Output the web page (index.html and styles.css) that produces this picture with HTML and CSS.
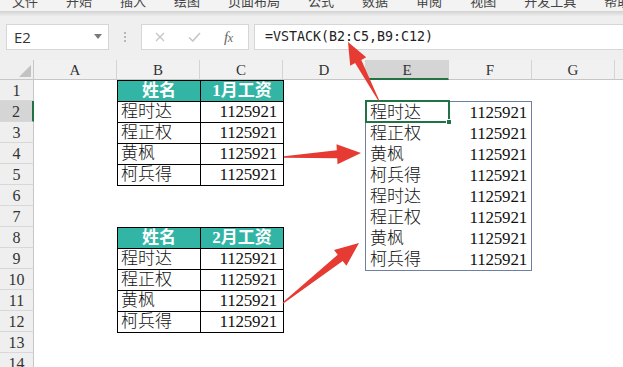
FILE: index.html
```html
<!DOCTYPE html>
<html lang="zh-CN">
<head>
<meta charset="utf-8">
<title>VSTACK</title>
<link rel="stylesheet" href="styles.css">
</head>
<body>
<div class="ribbon">
  <div class="tabs">
    <span>文件</span><span>开始</span><span>插入</span><span>绘图</span><span>页面布局</span><span>公式</span><span>数据</span><span>审阅</span><span>视图</span><span>开发工具</span><span>帮助</span>
  </div>
</div>
<div class="shade"></div>
<div class="fbar">
  <div class="namebox"><span>E2</span><svg class="dd" width="8" height="5" viewBox="0 0 8 5"><path d="M0 0H8L4 5Z" fill="#7a7a7a"/></svg></div>
  <div class="dots"><i></i><i></i><i></i></div>
  <div class="fbtns">
    <svg class="ic-x" width="10" height="10" viewBox="0 0 10 10"><path d="M1 1L9 9M9 1L1 9" stroke="#c4c4c4" stroke-width="1.3" fill="none"/></svg>
    <svg class="ic-ok" width="13" height="10" viewBox="0 0 13 10"><path d="M1 5.5L4.8 9L12 1" stroke="#c4c4c4" stroke-width="1.5" fill="none"/></svg>
    <span class="fx"><i>f</i><i class="sx">x</i></span>
  </div>
  <div class="formula">=VSTACK(B2:C5,B9:C12)</div>
</div>
<div class="sheet">
  <div class="corner"><svg width="12" height="12" viewBox="0 0 12 12"><path d="M12 0V12H0Z" fill="#c2c2c2"/></svg></div>
  <div class="colhead">
    <div>A</div><div>B</div><div>C</div><div>D</div><div class="on">E</div><div>F</div><div>G</div><div>H</div>
  </div>
  <div class="rowhead">
    <div>1</div><div class="on">2</div><div>3</div><div>4</div><div>5</div><div>6</div><div>7</div>
    <div>8</div><div>9</div><div>10</div><div>11</div><div>12</div><div>13</div><div>14</div>
  </div>

  <div class="tbl t1">
    <div class="c h">姓名</div><div class="c h">1月工资</div>
    <div class="c t">程时达</div><div class="c n">1125921</div>
    <div class="c t">程正权</div><div class="c n">1125921</div>
    <div class="c t">黄枫</div><div class="c n">1125921</div>
    <div class="c t">柯兵得</div><div class="c n">1125921</div>
  </div>

  <div class="tbl t2">
    <div class="c h">姓名</div><div class="c h">2月工资</div>
    <div class="c t">程时达</div><div class="c n">1125921</div>
    <div class="c t">程正权</div><div class="c n">1125921</div>
    <div class="c t">黄枫</div><div class="c n">1125921</div>
    <div class="c t">柯兵得</div><div class="c n">1125921</div>
  </div>

  <div class="spill">
    <div class="s t first">程时达<span class="sel"><span class="handle"></span></span></div><div class="s n">1125921</div>
    <div class="s t">程正权</div><div class="s n">1125921</div>
    <div class="s t">黄枫</div><div class="s n">1125921</div>
    <div class="s t">柯兵得</div><div class="s n">1125921</div>
    <div class="s t">程时达</div><div class="s n">1125921</div>
    <div class="s t">程正权</div><div class="s n">1125921</div>
    <div class="s t">黄枫</div><div class="s n">1125921</div>
    <div class="s t">柯兵得</div><div class="s n">1125921</div>
  </div>
</div>

<svg class="arrows" width="623" height="367" viewBox="0 0 623 367">
  <polygon points="348,42 350.2,65.7 355.1,63.1 378.6,101.2 379.4,100.8 361.3,59.9 366.2,57.3" fill="#e63b33"/>
  <polygon points="361,153 336.5,144.3 336.8,150.3 284,156.2 284,157.8 337.2,158.2 337.5,164.2" fill="#e63b33"/>
  <polygon points="359,243 334,250 337.7,254.8 282.6,302.5 283.4,303.5 342.7,261 346.4,265.75" fill="#e63b33"/>
</svg>
</body>
</html>
```

FILE: styles.css
```css
* { box-sizing: border-box; }
html, body { margin: 0; padding: 0; }
body {
  width: 623px;
  height: 367px;
  overflow: hidden;
  background: #fff;
  position: relative;
  font-family: "Noto Sans CJK SC", sans-serif;
}

/* ribbon tabs (cut off at top) */
.ribbon { height: 11px; background: #f3f3f3; overflow: hidden; }
.tabs {
  display: flex;
  gap: 28px;
  padding-left: 12px;
  margin-top: -8px;
  font-size: 13px;
  line-height: 17px;
  color: #444;
  white-space: nowrap;
}
.shade { height: 5px; background: linear-gradient(#d2d2d2, #ececec); }

/* formula bar */
.fbar {
  height: 44px;
  background: #efefef;
  display: flex;
  align-items: flex-start;
  padding-top: 8px;
}
.namebox {
  margin-left: 6px;
  width: 103px;
  height: 26px;
  background: #fff;
  border: 1px solid #d6d6d6;
  display: flex;
  align-items: center;
  justify-content: space-between;
  padding: 0 6px 0 7px;
  font-family: "Open Sans", sans-serif;
  font-size: 15px;
  color: #333;
}
.dd { margin-top: -2px; }
.dots {
  width: 32px;
  height: 26px;
  display: flex;
  flex-direction: column;
  align-items: center;
  justify-content: center;
  gap: 2px;
}
.dots i { width: 2px; height: 2px; background: #b8b8b8; display: block; }
.fbtns {
  width: 108px;
  height: 26px;
  background: #fff;
  border: 1px solid #d6d6d6;
  display: flex;
  align-items: center;
}
.ic-x { margin-left: 13px; }
.ic-ok { margin-left: 23px; }
.fx {
  margin-left: 23px;
  font-family: "Liberation Serif", serif;
  font-size: 15px;
  color: #666;
  letter-spacing: -0.5px;
}
.fx .sx { font-size: 12px; }
.formula {
  margin-left: 5px;
  flex: 1;
  height: 26px;
  background: #fff;
  border: 1px solid #d6d6d6;
  border-right: none;
  padding-left: 10px;
  font-family: "DejaVu Sans Mono", monospace;
  font-size: 13.3px;
  line-height: 24px;
  color: #222;
  white-space: nowrap;
}

/* sheet */
.sheet {
  display: grid;
  grid-template-columns: 34px repeat(8, 83px);
  grid-template-rows: 20px repeat(14, 21px);
}
.corner {
  grid-column: 1;
  grid-row: 1;
  background: #efefef;
  border-right: 1px solid #c8c8c8;
  border-bottom: 1px solid #c6c6c6;
  display: flex;
  align-items: flex-end;
  justify-content: flex-end;
  padding: 0 2px 2px 0;
}
.colhead { grid-column: 2 / 10; grid-row: 1; display: flex; }
.colhead div {
  width: 83px;
  flex: none;
  background: #f1f1f1;
  border-right: 1px solid #d4d4d4;
  border-bottom: 1px solid #c6c6c6;
  text-align: center;
  font-family: "Liberation Serif", serif;
  font-size: 15px;
  line-height: 20px;
  color: #333;
}
.colhead .on { background: #d5d5d5; border-bottom: 2px solid #217346; }

.rowhead { grid-column: 1; grid-row: 2 / 16; display: flex; flex-direction: column; }
.rowhead div {
  height: 21px;
  flex: none;
  background: #efefef;
  border-right: 1px solid #c6c6c6;
  border-bottom: 1px solid #d8d8d8;
  text-align: center;
  font-family: "Liberation Serif", serif;
  font-size: 16px;
  line-height: 21px;
  color: #333;
}
.rowhead .on { background: #d5d5d5; border-right: 2px solid #217346; }

/* source tables */
.tbl {
  display: grid;
  grid-template-columns: 83px 83px;
  grid-auto-rows: 21px;
  border-left: 1px solid #000;
  border-top: 1px solid #000;
  margin: 0 -1px -1px 0;
}
.t1 { grid-column: 3 / 5; grid-row: 2 / 7; }
.t2 { grid-column: 3 / 5; grid-row: 9 / 14; }
.c, .s {
  font-family: "Liberation Serif", "Noto Sans CJK SC", serif;
  font-size: 17px;
  line-height: 20px;
  color: #111;
  white-space: nowrap;
  overflow: hidden;
}
.c { border-right: 1px solid #000; border-bottom: 1px solid #000; }
.h {
  background: #33b5a5;
  color: #fff;
  font-weight: bold;
  text-align: center;
}
.t { padding-left: 3px; font-weight: 300; }
.n { text-align: right; padding-right: 6px; letter-spacing: -0.2px; }

/* spill range */
.spill {
  grid-column: 6 / 8;
  grid-row: 3 / 11;
  margin: 0 0 -2px -1px;
  border: 1px solid #6d80a3;
  display: grid;
  grid-template-columns: 83px 82px;
  grid-auto-rows: 21px;
}
.s { line-height: 21px; }
.s.t { padding-left: 4px; }
.s.n { padding-right: 4px; }
.first { position: relative; overflow: visible; }
.sel {
  position: absolute;
  left: -1px;
  top: -2px;
  width: 85px;
  height: 23px;
  border: 2px solid #217346;
}
.handle {
  position: absolute;
  right: -4px;
  bottom: -4px;
  width: 6px;
  height: 6px;
  background: #217346;
  border: 1px solid #fff;
}

.arrows { position: absolute; left: 0; top: 0; pointer-events: none; }
```
